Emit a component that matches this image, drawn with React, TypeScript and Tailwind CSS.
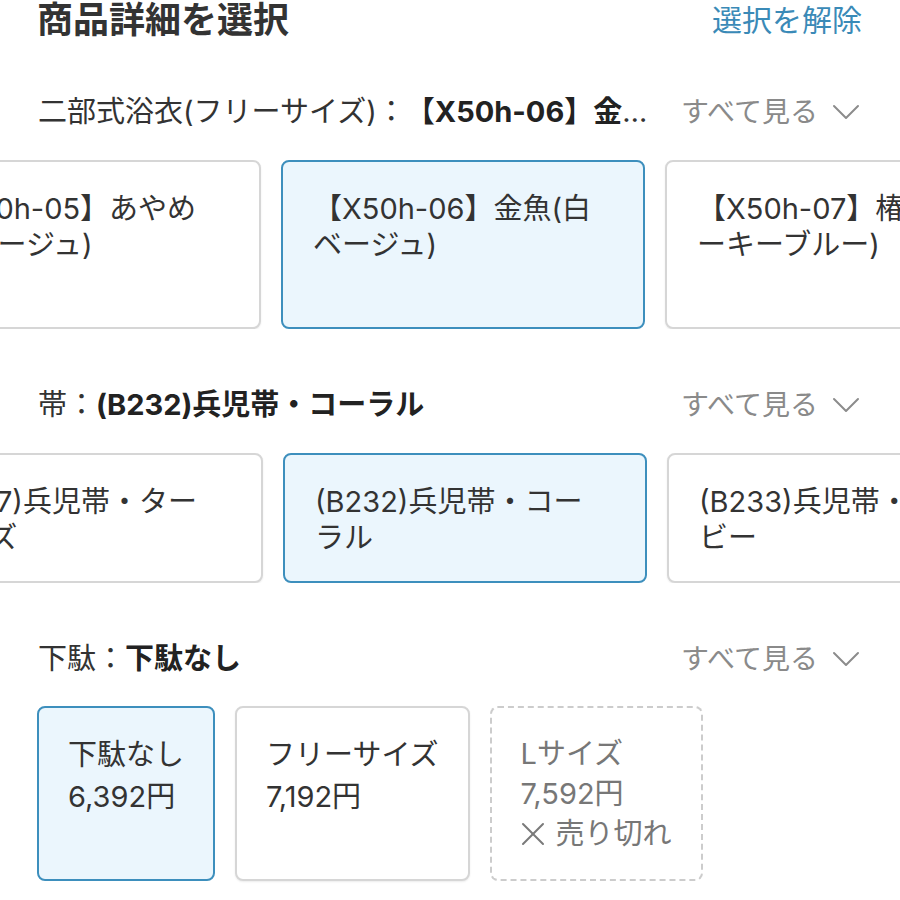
import React from "react";

type Line = string[];

function Chevron() {
  return (
    <svg width="28" height="16" viewBox="0 0 28 16" fill="none" stroke="#8c8c8c" strokeWidth="2" strokeLinecap="round" strokeLinejoin="round">
      <polyline points="2,2 14,14 26,2" />
    </svg>
  );
}

function CrossIcon() {
  return (
    <svg width="24" height="24" viewBox="0 0 24 24" fill="none" stroke="#7a7a7a" strokeWidth="2" strokeLinecap="round" className="mr-[11px] inline-block">
      <line x1="2" y1="2" x2="22" y2="22" />
      <line x1="22" y1="2" x2="2" y2="22" />
    </svg>
  );
}

function SectionHeader({ label, value }: { label: string; value: string }) {
  return (
    <div className="flex h-[48px] items-center pl-[38px] pr-[40px]">
      <div className="min-w-0 flex-1 truncate text-[29px] text-[#333]">
        {label}：<span className="font-bold text-[#222]">{value}</span>
      </div>
      <div className="ml-[14px] flex shrink-0 items-center gap-[14px] text-[28px] text-[#8a8a8a]">
        すべて見る
        <Chevron />
      </div>
    </div>
  );
}

function WideCard({ lines, selected, h }: { lines: Line; selected?: boolean; h: string }) {
  return (
    <div
      className={
        "w-[364px] shrink-0 rounded-[8px] border-2 pl-[30px] pt-[29px] text-[29px] leading-[36px] text-[#333] " +
        h +
        (selected
          ? " border-[#3d8fbd] bg-[#ebf6fd]"
          : " border-[#d6d6d6] bg-white shadow-[0_1px_2px_rgba(0,0,0,0.08)]")
      }
    >
      {lines.map((l, i) => (
        <div key={i} className="whitespace-nowrap">
          {l}
        </div>
      ))}
    </div>
  );
}

export default function App() {
  return (
    <div className="w-[900px] h-[900px] overflow-hidden bg-white font-['Inter','Noto_Sans_CJK_JP',sans-serif] [text-spacing-trim:space-all]">
      {/* title bar */}
      <div className="flex h-[40px] items-center justify-between pl-[37px] pr-[38px]">
        <div className="text-[36px] font-bold text-[#333]">商品詳細を選択</div>
        <div className="text-[30px] text-[#3a8ab7]">選択を解除</div>
      </div>

      {/* yukata */}
      <div className="mt-[48px]">
        <SectionHeader label="二部式浴衣(フリーサイズ)" value="【X50h-06】金魚(白ベージュ)" />
        <div className="mt-[24px] overflow-hidden">
          <div className="ml-[-103px] flex gap-[20px]">
            <WideCard h="h-[169px]" lines={["【X50h-05】あやめ", "(白ベージュ)"]} />
            <WideCard h="h-[169px]" selected lines={["【X50h-06】金魚(白", "ベージュ)"]} />
            <WideCard h="h-[169px]" lines={["【X50h-07】椿(スモ", "ーキーブルー)"]} />
          </div>
        </div>
      </div>

      {/* obi */}
      <div className="mt-[52px]">
        <SectionHeader label="帯" value="(B232)兵児帯・コーラル" />
        <div className="mt-[24px] overflow-hidden">
          <div className="ml-[-101px] flex gap-[20px]">
            <WideCard h="h-[130px]" lines={["(B227)兵児帯・ター", "コイズ"]} />
            <WideCard h="h-[130px]" selected lines={["(B232)兵児帯・コー", "ラル"]} />
            <WideCard h="h-[130px]" lines={["(B233)兵児帯・ネイ", "ビー"]} />
          </div>
        </div>
      </div>

      {/* geta */}
      <div className="mt-[52px]">
        <SectionHeader label="下駄" value="下駄なし" />
        <div className="mt-[23px] flex gap-[20px] pl-[37px]">
          <div className="h-[175px] rounded-[8px] border-2 border-[#3d8fbd] bg-[#ebf6fd] px-[29px] pt-[26px] text-[29px] leading-[42px] text-[#333]">
            <div className="whitespace-nowrap">下駄なし</div>
            <div className="whitespace-nowrap">6,392円</div>
          </div>
          <div className="h-[175px] rounded-[8px] border-2 border-[#d6d6d6] bg-white px-[29px] pt-[26px] text-[29px] leading-[42px] text-[#333] shadow-[0_1px_2px_rgba(0,0,0,0.08)]">
            <div className="whitespace-nowrap">フリーサイズ</div>
            <div className="whitespace-nowrap">7,192円</div>
          </div>
          <div className="h-[175px] rounded-[8px] border-2 border-dashed border-[#cccccc] bg-white px-[29px] pt-[26px] text-[29px] leading-[40px] text-[#777]">
            <div className="whitespace-nowrap">Lサイズ</div>
            <div className="whitespace-nowrap">7,592円</div>
            <div className="flex items-center whitespace-nowrap">
              <CrossIcon />
              売り切れ
            </div>
          </div>
        </div>
      </div>
    </div>
  );
}
